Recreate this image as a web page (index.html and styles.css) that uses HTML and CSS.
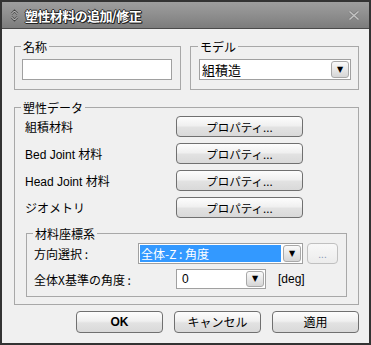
FILE: index.html
```html
<!DOCTYPE html>
<html lang="ja">
<head>
<meta charset="utf-8">
<link rel="stylesheet" href="styles.css">
</head>
<body>
<div class="window">
  <div class="titlebar">
    <svg class="ticon" width="9" height="13" viewBox="0 0 9 13">
      <path d="M1.5 5 L4.5 2 L7.5 5" fill="none" stroke="#444" stroke-width="2.4"/>
      <path d="M1.5 8 L4.5 11 L7.5 8" fill="none" stroke="#444" stroke-width="2.4"/>
      <path d="M1.5 5 L4.5 2 L7.5 5" fill="none" stroke="#e0e0e0" stroke-width="1"/>
      <path d="M1.5 8 L4.5 11 L7.5 8" fill="none" stroke="#e0e0e0" stroke-width="1"/>
    </svg>
    <span class="ttext">塑性材料の追加/修正</span>
    <svg class="tclose" width="12" height="11" viewBox="0 0 12 11">
      <path d="M1.5 1.5 L10.5 9.5 M10.5 1.5 L1.5 9.5" stroke="#7d7d7d" stroke-width="3"/>
      <path d="M1.5 1.5 L10.5 9.5 M10.5 1.5 L1.5 9.5" stroke="#c4c4c4" stroke-width="1.4"/>
    </svg>
  </div>
  <div class="body">
    <div class="toprow">
      <div class="group g-name">
        <div class="gtitle">名称</div>
        <div class="textbox"></div>
      </div>
      <div class="group g-model">
        <div class="gtitle">モデル</div>
        <div class="combo">
          <span class="cval">組積造</span>
          <span class="dd">▼</span>
        </div>
      </div>
    </div>

    <div class="group g-data">
      <div class="gtitle t-data">塑性データ</div>
      <div class="prows">
        <span class="plabel">組積材料</span><button class="btn pbtn">プロパティ...</button>
        <span class="plabel">Bed Joint 材料</span><button class="btn pbtn">プロパティ...</button>
        <span class="plabel">Head Joint 材料</span><button class="btn pbtn">プロパティ...</button>
        <span class="plabel">ジオメトリ</span><button class="btn pbtn">プロパティ...</button>
      </div>

      <div class="group g-coord">
        <div class="gtitle t-coord">材料座標系</div>
        <div class="crow1">
          <span class="clabel1">方向選択 :</span>
          <div class="combo combo-dir">
            <span class="sel">全体-Z : 角度</span>
            <span class="dd">▼</span>
          </div>
          <button class="btn dots">...</button>
        </div>
        <div class="crow2">
          <span class="clabel2">全体X基準の角度 :</span>
          <div class="combo combo-ang">
            <span class="cval">0</span>
            <span class="dd">▼</span>
          </div>
          <span class="unit">[deg]</span>
        </div>
      </div>
    </div>

    <div class="actions">
      <button class="btn abtn ok">OK</button>
      <button class="btn abtn">キャンセル</button>
      <button class="btn abtn">適用</button>
    </div>
  </div>
</div>
</body>
</html>
```

FILE: styles.css
```css
* { box-sizing: border-box; }
html, body { margin: 0; padding: 0; }
body {
  font-family: "Liberation Sans", "Noto Sans CJK JP", sans-serif;
  font-size: 12px;
  color: #000;
  background: #f0f0f0;
}
.window {
  width: 371px;
  height: 345px;
  border: 2px solid #333;
  background: #f0f0f0;
  display: flex;
  flex-direction: column;
}
.titlebar {
  height: 27px;
  flex: none;
  background: linear-gradient(#9e9e9e, #8e8e8e 50%, #7c7c7c);
  border-bottom: 1px solid #4a4a4a;
  display: flex;
  align-items: center;
  padding: 0 9px 0 8px;
}
.ticon { flex: none; }
.ttext {
  margin-left: 6px;
  font-family: "Noto Sans CJK JP", sans-serif;
  font-weight: bold;
  font-size: 13px;
  color: #fff;
  letter-spacing: -0.6px;
  text-shadow: 1px 0 0 #222, -1px 0 0 #222, 0 1px 0 #222, 0 -1px 0 #222, 1px 1px 0 #222;
  flex: 1;
}
.tclose { flex: none; }
.body {
  padding: 17px 10px 0 12px;
}
.toprow {
  display: flex;
  gap: 9px;
}
.group {
  border: 1px solid #a8a8a8;
}
.gtitle {
  width: fit-content;
  height: 14px;
  line-height: 14px;
  margin: -7px 0 0 -1px;
  padding: 0 2px;
  background: #f0f0f0;
  font-family: "Noto Sans CJK JP", sans-serif;
  font-size: 12px;
}
.g-name {
  width: 167px;
  padding: 0 8px 9px 7px;
}
.g-model {
  width: 169px;
  padding: 0 7px 9px 8px;
}
.textbox {
  margin-top: 5px;
  height: 21px;
  background: #fff;
  border: 1px solid #a0a0a0;
}
.combo {
  margin-top: 5px;
  height: 21px;
  background: #fff;
  border: 1px solid #a0a0a0;
  display: flex;
  align-items: center;
  padding: 0 1px 0 2px;
}
.cval {
  flex: 1;
  font-family: "Noto Sans CJK JP", sans-serif;
  font-size: 12px;
  line-height: 14px;
}
.g-model .cval { font-size: 13px; }
.dd {
  flex: none;
  width: 18px;
  height: 17px;
  border: 1px solid #a8a8a8;
  border-radius: 3px;
  background: linear-gradient(#fbfbfb, #e8e8e8 50%, #d6d6d6);
  font-family: "DejaVu Sans", sans-serif;
  font-size: 8px;
  line-height: 15px;
  text-align: center;
  color: #000;
}
.g-data {
  margin-top: 17px;
  padding: 0 0 7px 10px;
}
.t-data { margin-left: -4px; }
.prows {
  margin-top: 1px;
  display: grid;
  grid-template-columns: 151px 127px;
  grid-auto-rows: 21px;
  row-gap: 6px;
  align-items: center;
}
.plabel {
  font-family: "Liberation Sans", "Noto Sans CJK JP", sans-serif;
  font-size: 12px;
}
.btn {
  font-family: "Noto Sans CJK JP", sans-serif;
  font-size: 12px;
  color: #000;
  border: 1px solid #707070;
  border-radius: 4px;
  background: linear-gradient(#fdfdfd, #f0f0f0 45%, #e2e2e2 55%, #d9d9d9);
  padding: 0;
  margin: 0;
  line-height: 14px;
}
.pbtn {
  height: 21px;
  width: 127px;
  font-size: 11.5px;
}
.g-coord {
  margin: 15px 11px 0 1px;
  padding: 0 7px 7px 7px;
}
.t-coord { margin-left: -1px; }
.crow1 {
  margin-top: 2px;
  display: flex;
  align-items: center;
  height: 21px;
}
.clabel1 {
  width: 104px;
  flex: none;
  font-family: "Noto Sans CJK JP", sans-serif;
}
.combo-dir {
  margin-top: 0;
  width: 165px;
  flex: none;
  padding: 1px 1px 1px 1px;
}
.sel {
  flex: 1;
  height: 17px;
  margin-right: 2px;
  background: #3399ff;
  color: #fff;
  font-family: "Noto Sans CJK JP", sans-serif;
  line-height: 17px;
  padding-left: 1px;
}
.dots {
  margin-left: 4px;
  width: 31px;
  height: 21px;
  border-color: #c0c0c0;
  background: linear-gradient(#f8f8f8, #ececec);
  color: #8a9ab8;
  font-size: 10px;
  line-height: 10px;
}
.crow2 {
  margin-top: 5px;
  display: flex;
  align-items: center;
  height: 20px;
}
.clabel2 {
  width: 142px;
  flex: none;
  font-family: "Noto Sans CJK JP", sans-serif;
}
.combo-ang {
  margin-top: 0;
  width: 90px;
  height: 20px;
  flex: none;
  padding: 0 1px 0 5px;
}
.combo-ang .cval { font-family: "Liberation Sans", sans-serif; }
.combo-ang .dd { height: 16px; line-height: 14px; }
.unit {
  margin-left: 12px;
  font-family: "Liberation Sans", sans-serif;
}
.actions {
  margin-top: 6px;
  display: flex;
  justify-content: flex-end;
  gap: 11px;
}
.abtn {
  width: 87px;
  height: 22px;
}
.ok {
  font-family: "Liberation Sans", sans-serif;
  font-weight: bold;
}
```
